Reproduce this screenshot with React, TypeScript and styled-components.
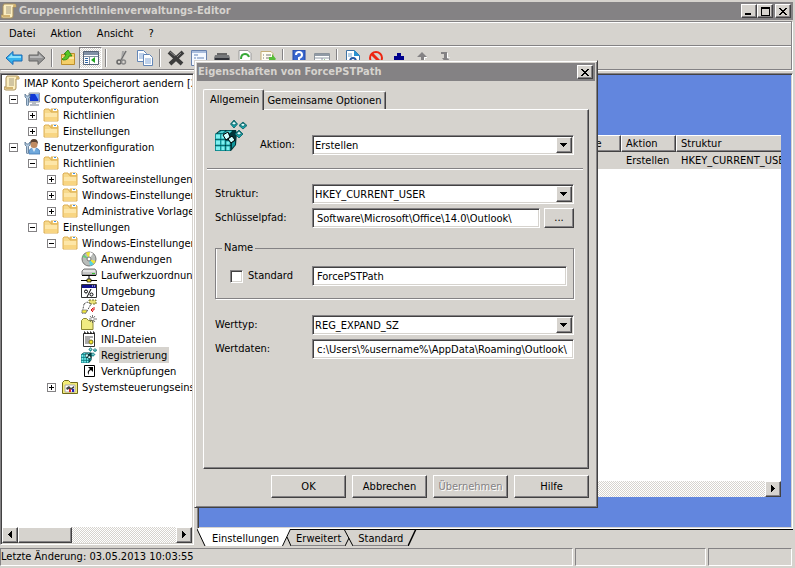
import React from "react";
import styled, { createGlobalStyle, css } from "styled-components";

const face = "#d6d3ce";
const shade = "#848284";
const dark = "#424142";
const blue = "#6286de";

const raised = css`
  border: 1px solid;
  border-color: #fff ${dark} ${dark} #fff;
  box-shadow: inset -1px -1px ${shade};
`;
const sunken = css`
  border: 1px solid;
  border-color: ${shade} #fff #fff ${shade};
  box-shadow: inset 1px 1px ${dark}, inset -1px -1px ${face};
`;

const GlobalStyle = createGlobalStyle`
  * { box-sizing: border-box; }
  body { margin: 0; overflow: hidden; background: ${face}; }
  body, button, input, select, table {
    font: 11px/16px "DejaVu Sans Condensed", "Noto Sans", sans-serif;
    color: #000;
  }
  button { padding: 0; border: 0; background: none; white-space: nowrap; }
  svg { display: block; flex: none; }
`;

const Window = styled.div`
  height: 100vh;
  display: flex;
  flex-direction: column;
  padding: 2px 2px 2px 0;
  background: ${face};
`;
const TitleBar = styled.div`
  height: 18px;
  flex: none;
  display: flex;
  align-items: center;
  background: ${shade};
  color: ${face};
  padding: 0 2px 0 1px;
  gap: 2px;
`;
const Title = styled.h1`
  flex: 1;
  margin: 0;
  font: bold 11px/16px "DejaVu Sans Condensed", "Noto Sans", sans-serif;
  white-space: nowrap;
`;
const Captions = styled.div`
  display: flex;
  gap: 2px;
`;
const CaptionButton = styled.button`
  ${raised}
  width: 16px;
  height: 14px;
  display: grid;
  place-items: center;
  background: ${face};
`;
const CaptionPair = styled.div`
  display: flex;
`;
const Bars = styled.div`
  flex: none;
  margin: 1px 1px 2px 0;
  border: solid ${shade};
  border-width: 1px 1px 1px 0;
  box-shadow: 1px 1px #fff, inset 0 1px #fff;
`;
const MenuBar = styled.nav`
  height: 24px;
  display: flex;
  align-items: center;
  gap: 15px;
  padding: 1px 0 0 9px;
  border-bottom: 1px solid ${shade};
`;
const ToolBar = styled.div`
  height: 23px;
  display: flex;
  align-items: center;
  padding-left: 2px;
  border-top: 1px solid #fff;
`;
const checker = css`
  background: repeating-conic-gradient(#fff 0 25%, ${face} 0 50%) 0 0 / 2px 2px;
`;
const ToolButton = styled.button<{ $pressed?: boolean }>`
  width: 23px;
  height: 22px;
  display: grid;
  place-items: center;
  ${(p) =>
    p.$pressed &&
    css`
      ${checker}
      border: 1px solid;
      border-color: ${shade} #fff #fff ${shade};
    `}
`;
const ToolSeparator = styled.div`
  width: 2px;
  height: 18px;
  margin: 0 3px;
  border-left: 1px solid ${shade};
  border-right: 1px solid #fff;
`;
const Main = styled.main`
  flex: 1;
  min-height: 0;
  display: flex;
  gap: 3px;
  margin-top: 1px;
`;
const TreePane = styled.section`
  ${sunken}
  width: 194px;
  flex: none;
  margin-bottom: 1px;
  padding: 1px;
  display: flex;
  flex-direction: column;
  background: #fff;
`;
const Tree = styled.ul`
  flex: 1;
  margin: 0;
  padding: 0;
  list-style: none;
  overflow: hidden;
`;
const TreeRow = styled.li<{ $level: number }>`
  height: 16px;
  display: flex;
  align-items: center;
  white-space: nowrap;
  padding-left: ${(p) => (p.$level ? p.$level * 19 - 17 : 2)}px;
`;
const ExpanderSlot = styled.span`
  width: 20px;
  flex: none;
  padding-left: 5px;
  display: flex;
`;
const Expander = styled.button`
  width: 9px;
  height: 9px;
  border: 1px solid ${shade};
  background: #fff;
`;
const TreeLabel = styled.span<{ $selected?: boolean }>`
  margin-left: 2px;
  padding: 2px 2px 0;
  line-height: 14px;
  background: ${(p) => (p.$selected ? face : "transparent")};
`;
const ScrollBar = styled.div`
  ${checker}
  height: 16px;
  flex: none;
  display: flex;
`;
const ScrollButton = styled.button`
  ${raised}
  width: 16px;
  height: 16px;
  background: ${face};
  display: grid;
  place-items: center;
`;
const Thumb = styled.div`
  ${raised}
  width: 54px;
  background: ${face};
`;
const Space = styled.div`
  flex: 1;
`;
const RightSide = styled.section`
  flex: 1;
  min-width: 0;
  display: flex;
  flex-direction: column;
`;
const Detail = styled.div`
  ${sunken}
  flex: 1;
  min-height: 0;
  background: ${blue};
  padding: 61px 11px 31px;
`;
const List = styled.div`
  height: 100%;
  display: flex;
  flex-direction: column;
  overflow: hidden;
  background: #fff;
`;
const TableBox = styled.div`
  flex: 1;
  overflow: hidden;
`;
const Table = styled.table`
  width: 620px;
  table-layout: fixed;
  border-collapse: separate;
  border-spacing: 0;
  text-align: left;
  white-space: nowrap;
`;
const Th = styled.th<{ $width: number }>`
  ${raised}
  width: ${(p) => p.$width}px;
  height: 17px;
  padding: 1px 0 0 4px;
  line-height: 14px;
  background: ${face};
  font-weight: normal;
`;
const Td = styled.td`
  height: 17px;
  padding: 1px 0 0 5px;
  background: ${face};
`;
const SheetTabs = styled.div`
  height: 17px;
  flex: none;
  display: flex;
`;
const SheetTab = styled.button<{ $active?: boolean }>`
  height: 17px;
  padding: 1px 1px 0;
  border-bottom: 1px solid ${(p) => (p.$active ? "#fff" : shade)};
  border-top: 1px solid ${(p) => (p.$active ? "#fff" : "#000")};
  background: ${(p) => (p.$active ? "#fff" : face)};
`;
const SheetRest = styled.div`
  flex: 1;
  border-top: 1px solid #000;
`;
const StatusBar = styled.footer`
  height: 18px;
  flex: none;
  margin-top: 2px;
  display: grid;
  grid-template-columns: 1fr 131px 84px;
  gap: 2px;
  padding-right: 1px;
`;
const StatusField = styled.div`
  border: 1px solid;
  border-color: ${shade} #fff #fff ${shade};
`;

/* Dialog */
const Dialog = styled.div`
  position: absolute;
  left: 194px;
  top: 60px;
  width: 404px;
  border: 1px solid;
  border-color: ${face} ${dark} ${dark} ${face};
  box-shadow: inset 1px 1px #fff, inset -1px -1px ${shade};
  background: ${face};
  padding: 2px;
`;
const DialogBody = styled.form`
  padding: 8px 6px 7px;
`;
const TabList = styled.div`
  display: flex;
  align-items: flex-end;
  height: 20px;
`;
const Tab = styled.button<{ $active?: boolean }>`
  height: ${(p) => (p.$active ? 21 : 18)}px;
  margin-bottom: ${(p) => (p.$active ? -1 : 0)}px;
  padding: 0 4px 0 ${(p) => (p.$active ? 6 : 3)}px;
  border: solid;
  border-width: 1px 1px 0;
  border-color: #fff ${dark} #fff #fff;
  border-left-width: ${(p) => (p.$active ? 1 : 0)}px;
  border-radius: 2px 2px 0 0;
  box-shadow: inset -1px 0 ${shade};
  background: ${face};
`;
const Panel = styled.div`
  ${raised}
  height: 360px;
  padding: 0 14px 0 11px;
`;
const HeadRow = styled.div`
  height: 58px;
  display: grid;
  grid-template-columns: 45px 52px 1fr;
  align-items: start;
  padding-top: 9px;
`;
const HeadLabel = styled.label`
  padding-top: 18px;
`;
const HeadField = styled.div`
  padding-top: 16px;
`;
const Rule = styled.hr`
  height: 2px;
  margin: 0 -9px 14px -8px;
  border: solid;
  border-width: 1px 0;
  border-color: ${shade} transparent #fff;
`;
const Row = styled.div`
  display: grid;
  grid-template-columns: 97px 1fr;
  align-items: center;
  height: 20px;
  margin-bottom: 4px;
`;
const Inline = styled.div`
  display: flex;
  gap: 4px;
`;
const TextBox = styled.input`
  ${sunken}
  width: 100%;
  height: 20px;
  padding: 0 4px;
  border-radius: 0;
  background: #fff;
  outline: 0;
`;
const SelectBox = styled.div`
  position: relative;
`;
const Select = styled.select`
  ${sunken}
  appearance: none;
  width: 100%;
  height: 20px;
  padding: 1px 20px 0 2px;
  border-radius: 0;
  background: #fff;
  display: block;
`;
const DropMark = styled.span`
  ${raised}
  position: absolute;
  top: 2px;
  right: 2px;
  width: 16px;
  height: 16px;
  display: grid;
  place-items: center;
  background: ${face};
  pointer-events: none;
`;
const PushButton = styled.button`
  ${raised}
  width: 75px;
  height: 23px;
  background: ${face};
  &:disabled {
    color: ${shade};
    text-shadow: 1px 1px #fff;
  }
`;
const BrowseButton = styled(PushButton)`
  width: 30px;
  height: 20px;
  flex: none;
`;
const Group = styled.fieldset`
  margin: 12px 0 16px;
  padding: 10px 6px 12px 14px;
  border: 1px solid ${shade};
  box-shadow: 1px 1px #fff, inset 1px 0 #fff;
  min-width: 0;
`;
const Legend = styled.legend`
  height: 16px;
  margin-left: -8px;
  padding: 0 2px;
  background: ${face};
`;
const GroupRow = styled.div`
  display: grid;
  grid-template-columns: 82px 1fr;
  align-items: center;
`;
const CheckLabel = styled.label`
  display: flex;
  align-items: center;
  gap: 5px;
`;
const CheckBox = styled.input`
  ${sunken}
  appearance: none;
  width: 13px;
  height: 13px;
  margin: 0;
  background: #fff;
`;
const Buttons = styled.div`
  display: flex;
  justify-content: flex-end;
  gap: 6px;
  margin-top: 6px;
`;

/* Glyphs */
const Triangle = ({ dir }: { dir: "left" | "right" | "down" }) => (
  <svg width="8" height="8" shapeRendering="crispEdges" aria-hidden="true">
    <path
      d={
        dir === "left"
          ? "M5 0h1v7h-1zM4 1h1v5h-1zM3 2h1v3h-1zM2 3h1v1h-1z"
          : dir === "right"
          ? "M2 0h1v7h-1zM3 1h1v5h-1zM4 2h1v3h-1zM5 3h1v1h-1z"
          : "M0 2h7v1h-7zM1 3h5v1h-5zM2 4h3v1h-3zM3 5h1v1h-1z"
      }
    />
  </svg>
);
const CloseGlyph = () => (
  <svg width="8" height="7" shapeRendering="crispEdges" aria-hidden="true">
    <path d="M0 0h2v1h-2zM6 0h2v1h-2zM1 1h2v1h-2zM5 1h2v1h-2zM2 2h4v1h-4zM3 3h2v1h-2zM2 4h4v1h-4zM1 5h2v1h-2zM5 5h2v1h-2zM0 6h2v1h-2zM6 6h2v1h-2z" />
  </svg>
);
const PlusMinus = ({ open }: { open: boolean }) => (
  <svg width="7" height="7" shapeRendering="crispEdges" aria-hidden="true">
    <path d={open ? "M1 3h5v1h-5z" : "M1 3h5v1h-5zM3 1h1v5h-1z"} />
  </svg>
);

const Icon16 = ({ children }: { children: React.ReactNode }) => (
  <svg width="16" height="16" viewBox="0 0 16 16" aria-hidden="true">
    {children}
  </svg>
);
const Scroll = () => (
  <Icon16>
    <path d="M3 1h10q2 0 2 2v1h-3v9q0 2-2 2H2q-2 0-2-2v-1h2V3z" fill="#fbeec0" stroke="#a98f58" />
    <path d="M12 4V3q0-2 2-2 1 0 1 3zM1 12h8v2H2q-1 0-1-2z" fill="#d2b370" />
    <path d="M5 4h5M5 6h5M5 8h5M5 10h5" stroke="#a69b81" />
  </Icon16>
);
const Folder = () => (
  <Icon16>
    <path d="M1 3l1-1h4l1 2h7l1 1v9H1z" fill="#f7d98b" stroke="#dcae55" />
    <path d="M8 4V2h6l1 1v2H8z" fill="#f2cb6c" stroke="#dcae55" />
    <path d="M10 2h4v2h-4z" fill="#fff" />
    <path d="M11 2h2v1h-2z" fill="#3d8fe6" />
    <path d="M2 6h12v4H2z" fill="#fde6a8" />
    <path d="M2 10h12v4H2z" fill="#f8d582" />
  </Icon16>
);
const Wrench = () => (
  <path d="M1 3v3l1.500 1.500V14l1 1 1-1V7.500L6 6V3L4.500 5h-2z" fill="#b5cbe0" stroke="#54718e" strokeWidth=".8" />
);
const Computer = () => (
  <Icon16>
    <path d="M5 2h10.500v9H5z" fill="#d4d8de" stroke="#8f98a5" />
    <path d="M6 3h8.500v7H6z" fill="#1137d4" />
    <path d="M11 3h3.500v6z" fill="#6da6ff" />
    <path d="M8 11h4v2h3v2H6v-2h2z" fill="#b5bbc4" />
    <Wrench />
  </Icon16>
);
const User = () => (
  <Icon16>
    <path d="M5 15q-1-6 5-6t6 5v1z" fill="#6fa8dc" stroke="#4279b2" strokeWidth=".8" />
    <path d="M8 9l2 4 2-4z" fill="#e5eef6" />
    <circle cx="10" cy="5.500" r="3.500" fill="#c08b62" />
    <path d="M6 5q0-5 4-5t4 5l-2-2-4 0z" fill="#5b4333" />
    <Wrench />
  </Icon16>
);
const Disc = () => (
  <Icon16>
    <circle cx="8" cy="8" r="7" fill="#b9bdba" stroke="#777" />
    <path d="M8 8L5 1.500l4-.5z" fill="#f0e634" />
    <path d="M8 8l1-7 3 1.500z" fill="#fff" />
    <path d="M8 8l1 7 4-2z" fill="#55d3df" />
    <path d="M8 8l5 5 1.500-3z" fill="#f0e634" />
    <path d="M8 8L1.500 6 3 3.500z" fill="#66cc7b" />
    <circle cx="8" cy="8" r="2" fill="#fff" stroke="#777" />
  </Icon16>
);
const Drive = () => (
  <Icon16>
    <path d="M1 4l2-2h11l1.500 2v4H1z" fill="#c6c6c6" stroke="#777" />
    <path d="M2 4h12" stroke="#fff" />
    <path d="M11 6.500h3" stroke="#31c231" />
    <path d="M1 8.500h14M8 9v3M0 13.500h16" stroke="#000" />
    <path d="M6 12h4v3H6z" fill="#e6d52f" stroke="#000" strokeWidth=".7" />
  </Icon16>
);
const Environment = () => (
  <Icon16>
    <path d="M.5 1.500h15v13H.5z" fill="#fff" stroke="#333" />
    <path d="M1 2h14v3H1z" fill="#10118c" />
    <path d="M11 3h1M13 3h1" stroke="#fff" />
    <path d="M10 6l-4 8" fill="none" stroke="#000" />
    <circle cx="10.500" cy="11.500" r="1.500" fill="none" stroke="#000" />
    <circle cx="5" cy="8.500" r="1.500" fill="#fff" stroke="#000" />
  </Icon16>
);
const Files = () => (
  <Icon16>
    <path d="M8 1h7v4H8z" fill="#e9e27a" stroke="#77742e" strokeDasharray="2 1" />
    <path d="M3 5l3-2 4 2-5 9H1l1-4z" fill="#fff" stroke="#555" strokeDasharray="2 1" />
    <path d="M1 11h5l-1 3H1z" fill="#f2e83a" stroke="#777" strokeWidth=".7" />
    <path d="M10 11h3V8M10 11l2-2M10 11l2 2" fill="none" stroke="#d91111" />
  </Icon16>
);
const NewFolder = () => (
  <Icon16>
    <path d="M.5 5.500l2-2h3l2 2H12v9H.5z" fill="#f0eb82" stroke="#8b8732" />
    <path d="M11.500 0v8M8 4h8M9 1l5 6M14 1L9 7" stroke="#555" strokeWidth=".8" />
    <circle cx="11.500" cy="4" r="1.200" fill="#fff" />
  </Icon16>
);
const IniFile = () => (
  <Icon16>
    <path d="M2.500 2.500h11v13h-11z" fill="#fff" stroke="#333" />
    <path d="M3 1h1v2M6 1h1v2M9 1h1v2M12 1h1v2" fill="none" stroke="#000" />
    <path d="M4 6h8M4 8h5M4 10h4M4 12h4" stroke="#555" />
    <circle cx="10" cy="11" r="2" fill="#f5e72a" stroke="#77711c" />
  </Icon16>
);
const Registry = ({ size = 16 }: { size?: number }) => (
  <svg width={size} height={size} viewBox="0 0 32 32" aria-hidden="true">
    <path d="M0 15l5-4h16l1 3-1 12-5 6H0z" fill="#00363a" />
    <g fill="#7ff0f0" stroke="#0a9398" strokeWidth=".8">
      <path d="M.5 15h5v5h-5zM6 15h4v5H6zM.5 21h5v5h-5zM6 21h4v5H6zM11 22h4v4h-4zM.5 27h5v4.500h-5zM6 27h4v4.500H6zM11 27h4v4.500h-4z" />
      <path d="M3 14l3-2h4l-2 2zM9 14l3-2h5l-2 2z" />
    </g>
    <path d="M8 16l5-3 2 5-4 3zM13 20l4-3 3 4-4 3z" fill="#cff" stroke="#000" />
    <path d="M17 24l3-2v4l-3 3z" fill="#11969b" />
    <g stroke="#075b60" strokeWidth=".8">
      <path d="M19 1l3.500 4-3.500 4-3.500-4zM28 3l4 3.500-4 3.500-4-3.500zM24 11l4 4-4 4-4-4z" fill="#12a8ae" />
      <path d="M19 2l2.500 3-2.500 1-2.500-1zM28 4l2.500 2-2.500 1.500L25 6zM24 12l2.500 3-2.500 1-2.500-1z" fill="#dff" />
    </g>
  </svg>
);
const Shortcut = () => (
  <Icon16>
    <path d="M3.500 2.500h10v11h-10z" fill="#fff" stroke="#000" />
    <path d="M7 4h5v5l-2-2q-3 1-2 5-3-3 1-6z" fill="#000" />
  </Icon16>
);
const ControlFolder = () => (
  <Icon16>
    <path d="M.5 3.500l2-2h4l2 2h7v11H.5z" fill="#f3ec77" stroke="#706a1b" />
    <path d="M3 6h10v7H3z" fill="#fff" stroke="#aaa" />
    <path d="M4 9l3-2 2 2 3-2v2l-3 2-2-1-2 1z" fill="#444" />
    <path d="M8 10v3" stroke="#d22" strokeWidth="2" />
    <path d="M11 10v3" stroke="#22b" strokeWidth="2" />
  </Icon16>
);

const Arrow = ({ back }: { back?: boolean }) => (
  <svg width="18" height="16" viewBox="0 0 18 16" aria-hidden="true">
    <path
      d={back ? "M1 8l7-6.500V5h9v6H8v3.500z" : "M17 8l-7-6.500V5H1v6h9v3.500z"}
      fill={back ? "#35b3ed" : "#929292"}
      stroke={back ? "#1b69b5" : "#676767"}
    />
    <path d={back ? "M3 8l4-4v2h9v2z" : "M15 8l-4-4v2H2v2z"} fill={back ? "#8de1fc" : "#b9b9b9"} />
  </svg>
);
const FolderUp = () => (
  <Icon16>
    <path d="M1.500 4.500h6l1-1h6v11h-13z" fill="#f5cf68" stroke="#bd8e2d" />
    <path d="M2 7h12v2H2z" fill="#ffe8a2" />
    <path d="M3 10q6 0 6-4h3L8 0 4 4h2q0 3-4 5z" fill="#57c724" stroke="#24810e" strokeWidth=".8" />
  </Icon16>
);
const TreeToggle = () => (
  <Icon16>
    <path d="M.5 1.500h15v13H.5z" fill="#fff" stroke="#586576" />
    <path d="M1 2h14v3H1z" fill="#8291a5" />
    <path d="M1 6.500h14M6.500 6v8" stroke="#8391a3" />
    <path d="M2 8.500h3M2 10.500h3M2 12.500h3" stroke="#3167a4" />
    <path d="M12 7v6l-4-3z" fill="#20a51d" />
  </Icon16>
);
const Scissors = () => (
  <Icon16>
    <path d="M12 1L7 10M9 1L8 10" stroke="#a5a5a5" strokeWidth="2" />
    <path d="M12 1L7 10" stroke="#666" />
    <circle cx="5" cy="12" r="2" fill="none" stroke="#666" strokeWidth="1.500" />
    <circle cx="9.500" cy="12" r="2" fill="none" stroke="#888" strokeWidth="1.500" />
  </Icon16>
);
const Copy = () => (
  <Icon16>
    {["M.5.5h6l3 3v8h-9z", "M6.500 4.500h6l3 3v8h-9z"].map((d) => (
      <path key={d} d={d} fill="#fff" stroke="#6386b7" />
    ))}
    <path d="M2 4h5M2 6h4M2 8h4M8 9h6M8 11h6M8 13h6" stroke="#80a5d8" />
  </Icon16>
);
const Delete = () => (
  <svg width="18" height="16" viewBox="0 0 18 16" aria-hidden="true">
    <path d="M2 2l13 12M16 2L3 14" stroke="#3d3d3d" strokeWidth="4" />
    <path d="M3 2l5 4M14 3l-4 4" stroke="#858585" />
  </svg>
);
const Sheet = () => (
  <Icon16>
    <path d="M.5.500h15v15H.5z" fill="#f5f9ff" stroke="#6781ad" />
    <path d="M1 1h14v2H1z" fill="#a9bddd" />
    <path d="M3 5h4M3 8h2M6 8h7M3 11h2M6 11h7" stroke="#6584b7" />
  </Icon16>
);
const Printer = () => (
  <Icon16>
    <path d="M3 3h10v4H3z" fill="#666" />
    <path d="M1 5h14l1 3v6H0V8z" fill="#77797b" />
    <path d="M1 8h14v2H1z" fill="#303238" />
  </Icon16>
);
const Refresh = () => (
  <Icon16>
    <path d="M2 .5h9l3 3v12H2z" fill="#fff" stroke="#999" />
    <path d="M4 9q0-5 4-5 3 0 4 3" fill="none" stroke="#37a837" strokeWidth="2" />
  </Icon16>
);
const Export = () => (
  <Icon16>
    <path d="M1 1.500h10l2 2v12H1z" fill="#fffdf1" stroke="#c4ae75" />
    <path d="M3 5h1M6 5h5M3 8h1M6 8h4" stroke="#777" />
    <path d="M9 7h3V4l4 5-4 4v-3H9z" fill="#57bd39" />
  </Icon16>
);
const Help = () => (
  <Icon16>
    <path d="M2 0h12v16H2z" fill="#3866ce" stroke="#2446a4" />
    <path d="M5 5q0-3 3-3t3 3q0 2-3 3v2" fill="none" stroke="#fff" strokeWidth="2" />
    <path d="M7 11h2v2H7z" fill="#fff" />
  </Icon16>
);
const Panes = () => (
  <Icon16>
    <path d="M.5 3.500h15v12H.5z" fill="#fff" stroke="#8b939b" />
    <path d="M1 4h14v2H1z" fill="#909aa5" />
    <path d="M1 8h14M8 8v7" stroke="#909aa5" />
    <path d="M10 9l3 3h-3z" fill="#20a51d" />
  </Icon16>
);
const DocInfo = () => (
  <Icon16>
    <path d="M1.500.5h8l5 5v10h-13z" fill="#fff" stroke="#3e73a5" />
    <path d="M9 0l6 6h-6z" fill="#2992d1" />
    <path d="M3 4h4M3 6h4" stroke="#73a7d2" />
    <path d="M5 12q0-4 3-4t3 4" fill="none" stroke="#285ba7" strokeWidth="2" />
  </Icon16>
);
const Forbidden = () => (
  <Icon16>
    <circle cx="8" cy="8" r="6" fill="none" stroke="#ed2510" strokeWidth="2" />
    <path d="M4 4l8 8" stroke="#ed2510" strokeWidth="3" />
  </Icon16>
);
const Plus = () => (
  <Icon16>
    <path d="M6 3h4v3h3v4h-3v3H6v-3H3V6h3z" fill="#00008c" />
  </Icon16>
);
const Up = () => (
  <Icon16>
    <path d="M8 2l5 5h-3v7H7V7H3z" fill={shade} />
    <path d="M10.500 14V7.500H13" stroke="#fff" fill="none" />
  </Icon16>
);
const Down = () => (
  <Icon16>
    <path d="M4 2h6v6h3l-4 5-4-5h2V4H4z" fill={shade} />
    <path d="M10.500 3v5h2.500" stroke="#fff" fill="none" />
  </Icon16>
);

const FirstEdge = () => (
  <svg width="14" height="17" aria-hidden="true">
    <path d="M0 0h14v17H8z" fill="#fff" />
    <path d="M0 0l8 17" stroke="#000" />
  </svg>
);
const MiddleEdge = ({ fill }: { fill: string }) => (
  <svg width="15" height="17" aria-hidden="true">
    <path d="M0 0h11L3 17H0z" fill={fill} />
    <path d="M10 .5h5" stroke="#000" />
    <path d="M10.500 0l-8 17M7 8l4 9" stroke="#000" fill="none" />
    <path d="M11 16.500h4" stroke={shade} />
  </svg>
);
const BackEdge = () => (
  <svg width="15" height="17" aria-hidden="true">
    <path d="M0 .5h15" stroke="#000" />
    <path d="M2 0l9 17M7 9l-4 8" stroke="#000" fill="none" />
    <path d="M0 16.500h3M11 16.500h4" stroke={shade} />
  </svg>
);
const LastEdge = () => (
  <svg width="13" height="17" aria-hidden="true">
    <path d="M0 .5h13" stroke="#000" />
    <path d="M12 0L4 17" stroke="#000" strokeWidth="1.500" />
    <path d="M0 16.500h4" stroke={shade} />
  </svg>
);

type Node = [number, boolean | null, React.ReactNode, string, boolean?];
const nodes: Node[] = [
  [0, null, <Scroll />, "IMAP Konto Speicherort aendern [2"],
  [1, true, <Computer />, "Computerkonfiguration"],
  [2, false, <Folder />, "Richtlinien"],
  [2, false, <Folder />, "Einstellungen"],
  [1, true, <User />, "Benutzerkonfiguration"],
  [2, true, <Folder />, "Richtlinien"],
  [3, false, <Folder />, "Softwareeinstellungen"],
  [3, false, <Folder />, "Windows-Einstellungen"],
  [3, false, <Folder />, "Administrative Vorlagen"],
  [2, true, <Folder />, "Einstellungen"],
  [3, true, <Folder />, "Windows-Einstellungen"],
  [4, null, <Disc />, "Anwendungen"],
  [4, null, <Drive />, "Laufwerkzuordnungen"],
  [4, null, <Environment />, "Umgebung"],
  [4, null, <Files />, "Dateien"],
  [4, null, <NewFolder />, "Ordner"],
  [4, null, <IniFile />, "INI-Dateien"],
  [4, null, <Registry />, "Registrierung", true],
  [4, null, <Shortcut />, "Verknüpfungen"],
  [3, false, <ControlFolder />, "Systemsteuerungseinstellungen"],
];

const toolGroups: [string, React.ReactNode][][] = [
  [["Zurück", <Arrow back />], ["Vorwärts", <Arrow />]],
  [["Nach oben", <FolderUp />], ["Konsolenstruktur", <TreeToggle />]],
  [["Ausschneiden", <Scissors />], ["Kopieren", <Copy />]],
  [["Löschen", <Delete />], ["Eigenschaften", <Sheet />], ["Drucken", <Printer />], ["Aktualisieren", <Refresh />], ["Exportieren", <Export />]],
  [["Hilfe", <Help />], ["Bereiche", <Panes />]],
  [["Bericht", <DocInfo />], ["Deaktivieren", <Forbidden />], ["Hinzufügen", <Plus />], ["Aufwärts", <Up />], ["Abwärts", <Down />]],
];

const DropDown = ({ id, value }: { id: string; value: string }) => (
  <SelectBox>
    <Select id={id} defaultValue={value}>
      <option>{value}</option>
    </Select>
    <DropMark>
      <Triangle dir="down" />
    </DropMark>
  </SelectBox>
);

const PropertiesDialog = () => (
  <Dialog role="dialog" aria-label="Eigenschaften von ForcePSTPath">
    <TitleBar>
      <Title as="h2">Eigenschaften von ForcePSTPath</Title>
      <CaptionButton aria-label="Schließen">
        <CloseGlyph />
      </CaptionButton>
    </TitleBar>
    <DialogBody>
      <TabList role="tablist">
        <Tab type="button" role="tab" aria-selected="true" $active>
          Allgemein
        </Tab>
        <Tab type="button" role="tab">
          Gemeinsame Optionen
        </Tab>
      </TabList>
      <Panel>
        <HeadRow>
          <Registry size={32} />
          <HeadLabel htmlFor="action">Aktion:</HeadLabel>
          <HeadField>
            <DropDown id="action" value="Erstellen" />
          </HeadField>
        </HeadRow>
        <Rule />
        <Row>
          <label htmlFor="hive">Struktur:</label>
          <DropDown id="hive" value="HKEY_CURRENT_USER" />
        </Row>
        <Row>
          <label htmlFor="key">Schlüsselpfad:</label>
          <Inline>
            <TextBox id="key" defaultValue={"Software\\Microsoft\\Office\\14.0\\Outlook\\"} />
            <BrowseButton type="button">...</BrowseButton>
          </Inline>
        </Row>
        <Group>
          <Legend>Name</Legend>
          <GroupRow>
            <CheckLabel>
              <CheckBox type="checkbox" />
              Standard
            </CheckLabel>
            <TextBox aria-label="Name" defaultValue="ForcePSTPath" />
          </GroupRow>
        </Group>
        <Row>
          <label htmlFor="type">Werttyp:</label>
          <DropDown id="type" value="REG_EXPAND_SZ" />
        </Row>
        <Row>
          <label htmlFor="data">Wertdaten:</label>
          <TextBox id="data" defaultValue={"c:\\Users\\%username%\\AppData\\Roaming\\Outlook\\"} />
        </Row>
      </Panel>
      <Buttons>
        <PushButton type="button">OK</PushButton>
        <PushButton type="button">Abbrechen</PushButton>
        <PushButton type="button" disabled>
          Übernehmen
        </PushButton>
        <PushButton type="button">Hilfe</PushButton>
      </Buttons>
    </DialogBody>
  </Dialog>
);

export default function App() {
  return (
    <>
      <GlobalStyle />
      <Window>
        <TitleBar>
          <Scroll />
          <Title>Gruppenrichtlinienverwaltungs-Editor</Title>
          <Captions>
            <CaptionPair>
              <CaptionButton aria-label="Minimieren">
                <svg width="8" height="8" aria-hidden="true">
                  <path d="M0 6h6v2H0z" />
                </svg>
              </CaptionButton>
              <CaptionButton aria-label="Maximieren">
                <svg width="9" height="9" aria-hidden="true">
                  <path d="M0 0h9v9H0zM1 2v6h7V2z" fillRule="evenodd" />
                </svg>
              </CaptionButton>
            </CaptionPair>
            <CaptionButton aria-label="Schließen">
              <CloseGlyph />
            </CaptionButton>
          </Captions>
        </TitleBar>
        <Bars>
          <MenuBar>
            {["Datei", "Aktion", "Ansicht", "?"].map((m) => (
              <button key={m}>{m}</button>
            ))}
          </MenuBar>
          <ToolBar>
            {toolGroups.map((group, g) => (
              <React.Fragment key={g}>
                {g > 0 && <ToolSeparator />}
                {group.map(([name, icon]) => (
                  <ToolButton key={name} aria-label={name} $pressed={name === "Konsolenstruktur"}>
                    {icon}
                  </ToolButton>
                ))}
              </React.Fragment>
            ))}
          </ToolBar>
        </Bars>
        <Main>
          <TreePane>
            <Tree>
              {nodes.map(([level, open, icon, text, selected], i) => (
                <TreeRow key={i} $level={level}>
                  {level > 0 && (
                    <ExpanderSlot>
                      {open !== null && (
                        <Expander aria-label={text} aria-expanded={open}>
                          <PlusMinus open={open} />
                        </Expander>
                      )}
                    </ExpanderSlot>
                  )}
                  {icon}
                  <TreeLabel $selected={selected}>{text}</TreeLabel>
                </TreeRow>
              ))}
            </Tree>
            <ScrollBar>
              <ScrollButton aria-label="Nach links">
                <Triangle dir="left" />
              </ScrollButton>
              <Thumb />
              <Space />
              <ScrollButton aria-label="Nach rechts">
                <Triangle dir="right" />
              </ScrollButton>
            </ScrollBar>
          </TreePane>
          <RightSide>
            <Detail>
              <List>
                <TableBox>
                  <Table>
                    <thead>
                      <tr>
                        <Th $width={329}>Name</Th>
                        <Th $width={83}>Reihenfolge</Th>
                        <Th $width={55}>Aktion</Th>
                        <Th $width={153}>Struktur</Th>
                      </tr>
                    </thead>
                    <tbody>
                      <tr>
                        <Td>ForcePSTPath</Td>
                        <Td>1</Td>
                        <Td>Erstellen</Td>
                        <Td>HKEY_CURRENT_USER</Td>
                      </tr>
                    </tbody>
                  </Table>
                </TableBox>
                <ScrollBar>
                  <Space />
                  <ScrollButton aria-label="Liste nach rechts">
                    <Triangle dir="right" />
                  </ScrollButton>
                </ScrollBar>
              </List>
            </Detail>
            <SheetTabs>
              <FirstEdge />
              <SheetTab $active>Einstellungen</SheetTab>
              <MiddleEdge fill="#fff" />
              <SheetTab>Erweitert</SheetTab>
              <BackEdge />
              <SheetTab>Standard</SheetTab>
              <LastEdge />
              <SheetRest />
            </SheetTabs>
          </RightSide>
        </Main>
        <StatusBar>
          <StatusField>Letzte Änderung: 03.05.2013 10:03:55</StatusField>
          <StatusField />
          <StatusField />
        </StatusBar>
      </Window>
      <PropertiesDialog />
    </>
  );
}
